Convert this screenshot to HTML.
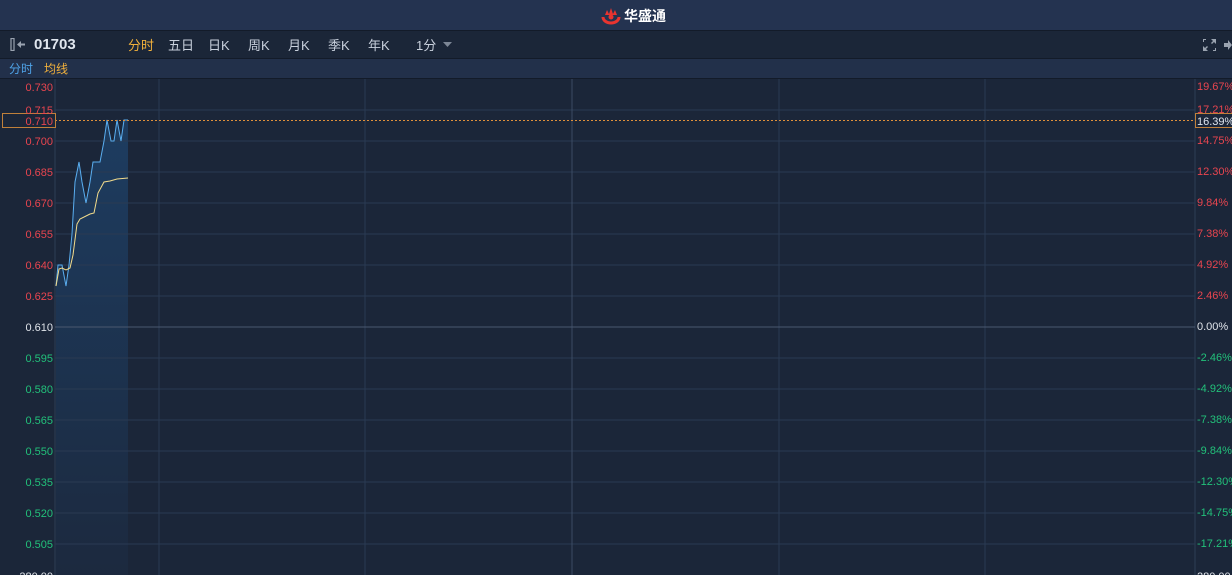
<!DOCTYPE html>
<html><head><meta charset="utf-8"><style>
html,body{margin:0;padding:0;width:1232px;height:575px;overflow:hidden;background:#1b2639;font-family:"Liberation Sans","Noto Sans CJK SC",sans-serif;}
.top{position:absolute;left:0;top:0;width:1232px;height:30px;background:#243350;border-bottom:1px solid #131b29;}
.logo{position:absolute;left:600px;top:6px;display:flex;align-items:center;color:#fff;font-weight:bold;font-size:14px;}
.bar{position:absolute;left:0;top:31px;width:1232px;height:27px;background:#1b2638;border-bottom:1px solid #131b29;}
.sub{position:absolute;left:0;top:59px;width:1232px;height:19px;background:#22304a;border-bottom:1px solid #131b29;}
.t{position:absolute;top:4px;font-size:13px;color:#c8d0dc;}
</style></head><body>
<div class="top"><div class="logo">
<svg width="22" height="18" viewBox="0 0 22 18"><path d="M3 10a8 6 0 1 0 16 0" fill="none" stroke="#e8342f" stroke-width="3"/><path d="M5 8l2-5 2 4 2-6 2 6 2-4 2 5" fill="#e8342f"/><circle cx="11" cy="10" r="2.5" fill="#e8342f"/></svg>
<span style="margin-left:2px">华盛通</span></div></div>
<div class="bar">
<svg style="position:absolute;left:10px;top:7px" width="16" height="13" viewBox="0 0 16 13"><rect x="1" y="0.5" width="3" height="12" fill="none" stroke="#9aa3b0" stroke-width="1.2"/><path d="M7 6.5l4-3.5v2.5h4v2h-4v2.5z" fill="#9aa3b0"/></svg>
<span style="position:absolute;left:34px;top:5px;font-size:15px;font-weight:bold;color:#e0e6ee">01703</span>
<span class="t" style="left:128px;color:#f0b03c">分时</span>
<span class="t" style="left:168px">五日</span>
<span class="t" style="left:208px">日K</span>
<span class="t" style="left:248px">周K</span>
<span class="t" style="left:288px">月K</span>
<span class="t" style="left:328px">季K</span>
<span class="t" style="left:368px">年K</span>
<span class="t" style="left:416px">1分</span>
<svg style="position:absolute;left:443px;top:11px" width="9" height="6"><path d="M0 0h9l-4.5 5z" fill="#7d8796"/></svg>
<svg style="position:absolute;left:1203px;top:8px" width="13" height="12" viewBox="0 0 13 12" fill="#9aa3b0"><path d="M8 0h5v5l-2-2-2 2-1-1 2-2zM5 12H0V7l2 2 2-2 1 1-2 2z"/><path d="M0 0h3v1H1v2H0zM13 12h-3v-1h2V9h1z"/></svg>
<svg style="position:absolute;left:1224px;top:9px" width="8" height="10"><path d="M0 3h4V0l4 5-4 5V7H0z" fill="#9aa3b0"/></svg>
</div>
<div class="sub"><span style="position:absolute;left:9px;top:1px;font-size:12px;color:#4fa3e8">分时</span><span style="position:absolute;left:44px;top:1px;font-size:12px;color:#f0b03c">均线</span></div>
<svg style="position:absolute;left:0;top:0" width="1232" height="575" font-family="Liberation Sans" font-size="11">
<defs><linearGradient id="g" x1="0" y1="0" x2="0" y2="1"><stop offset="0" stop-color="#1e426a"/><stop offset="1" stop-color="#1c2a40"/></linearGradient></defs>
<line x1="55" y1="79" x2="55" y2="575" stroke="#2e3d55"/>
<line x1="1195" y1="79" x2="1195" y2="575" stroke="#2e3d55"/>
<path d="M56 286L58 265L62 265L66 286L69 265L72 234L75 182L79 162L82 182L86 203L90 182L93 162L100 162L104 141L107 120L111 141L114 141L117 120L121 141L124 120L128 120L128 575L56 575Z" fill="url(#g)" opacity="0.8"/>
<g stroke="#2a3a52">
<line x1="55" x2="1195" y1="110" y2="110"/><line x1="55" x2="1195" y1="141" y2="141"/><line x1="55" x2="1195" y1="172" y2="172"/><line x1="55" x2="1195" y1="203" y2="203"/><line x1="55" x2="1195" y1="234" y2="234"/><line x1="55" x2="1195" y1="265" y2="265"/><line x1="55" x2="1195" y1="296" y2="296"/><line x1="55" x2="1195" y1="358" y2="358"/><line x1="55" x2="1195" y1="389" y2="389"/><line x1="55" x2="1195" y1="420" y2="420"/><line x1="55" x2="1195" y1="451" y2="451"/><line x1="55" x2="1195" y1="482" y2="482"/><line x1="55" x2="1195" y1="513" y2="513"/><line x1="55" x2="1195" y1="544" y2="544"/>
<line x1="159" x2="159" y1="79" y2="575"/><line x1="365" x2="365" y1="79" y2="575"/><line x1="779" x2="779" y1="79" y2="575"/><line x1="985" x2="985" y1="79" y2="575"/>
</g>
<line x1="572" x2="572" y1="79" y2="575" stroke="#3b4b64"/>
<line x1="55" x2="1195" y1="327" y2="327" stroke="#4a5870"/>
<path d="M56 286L58 265L62 265L66 286L69 265L72 234L75 182L79 162L82 182L86 203L90 182L93 162L100 162L104 141L107 120L111 141L114 141L117 120L121 141L124 120L128 120" fill="none" stroke="#5aaef0" stroke-width="1"/>
<path d="M56 286L59 269L62 268L66 270L70 268L73 255L77 224L80 219L90 214L94 213L98 193L104 182L110 181L117 179L128 178" fill="none" stroke="#f3dc8c" stroke-width="1"/>
<line x1="55" x2="1195" y1="120.5" y2="120.5" stroke="#e0903a" stroke-dasharray="2,2"/>
<rect x="2.5" y="113.5" width="53" height="14" fill="#1b2639" stroke="#c0803a"/>
<rect x="1195.5" y="113.5" width="38" height="14" fill="#1b2639" stroke="#c0803a"/>
<g text-anchor="end" fill="#e8454f">
<text x="53" y="91">0.730</text><text x="53" y="114">0.715</text><text x="53" y="125">0.710</text><text x="53" y="145">0.700</text><text x="53" y="176">0.685</text><text x="53" y="207">0.670</text><text x="53" y="238">0.655</text><text x="53" y="269">0.640</text><text x="53" y="300">0.625</text>
</g>
<text x="53" y="331" text-anchor="end" fill="#e0e4ea">0.610</text>
<g text-anchor="end" fill="#22c07a">
<text x="53" y="362">0.595</text><text x="53" y="393">0.580</text><text x="53" y="424">0.565</text><text x="53" y="455">0.550</text><text x="53" y="486">0.535</text><text x="53" y="517">0.520</text><text x="53" y="548">0.505</text>
</g>
<text x="53" y="580" text-anchor="end" fill="#e0e4ea">280.00</text>
<g fill="#e8454f">
<text x="1197" y="90">19.67%</text><text x="1197" y="113">17.21%</text><text x="1197" y="144">14.75%</text><text x="1197" y="175">12.30%</text><text x="1197" y="206">9.84%</text><text x="1197" y="237">7.38%</text><text x="1197" y="268">4.92%</text><text x="1197" y="299">2.46%</text>
</g>
<text x="1197" y="125" fill="#e0e6ee">16.39%</text>
<text x="1197" y="330" fill="#e0e4ea">0.00%</text>
<g fill="#22c07a">
<text x="1197" y="361">-2.46%</text><text x="1197" y="392">-4.92%</text><text x="1197" y="423">-7.38%</text><text x="1197" y="454">-9.84%</text><text x="1197" y="485">-12.30%</text><text x="1197" y="516">-14.75%</text><text x="1197" y="547">-17.21%</text>
</g>
<text x="1197" y="580" fill="#e0e4ea">280.00</text>
</svg>
</body></html>
